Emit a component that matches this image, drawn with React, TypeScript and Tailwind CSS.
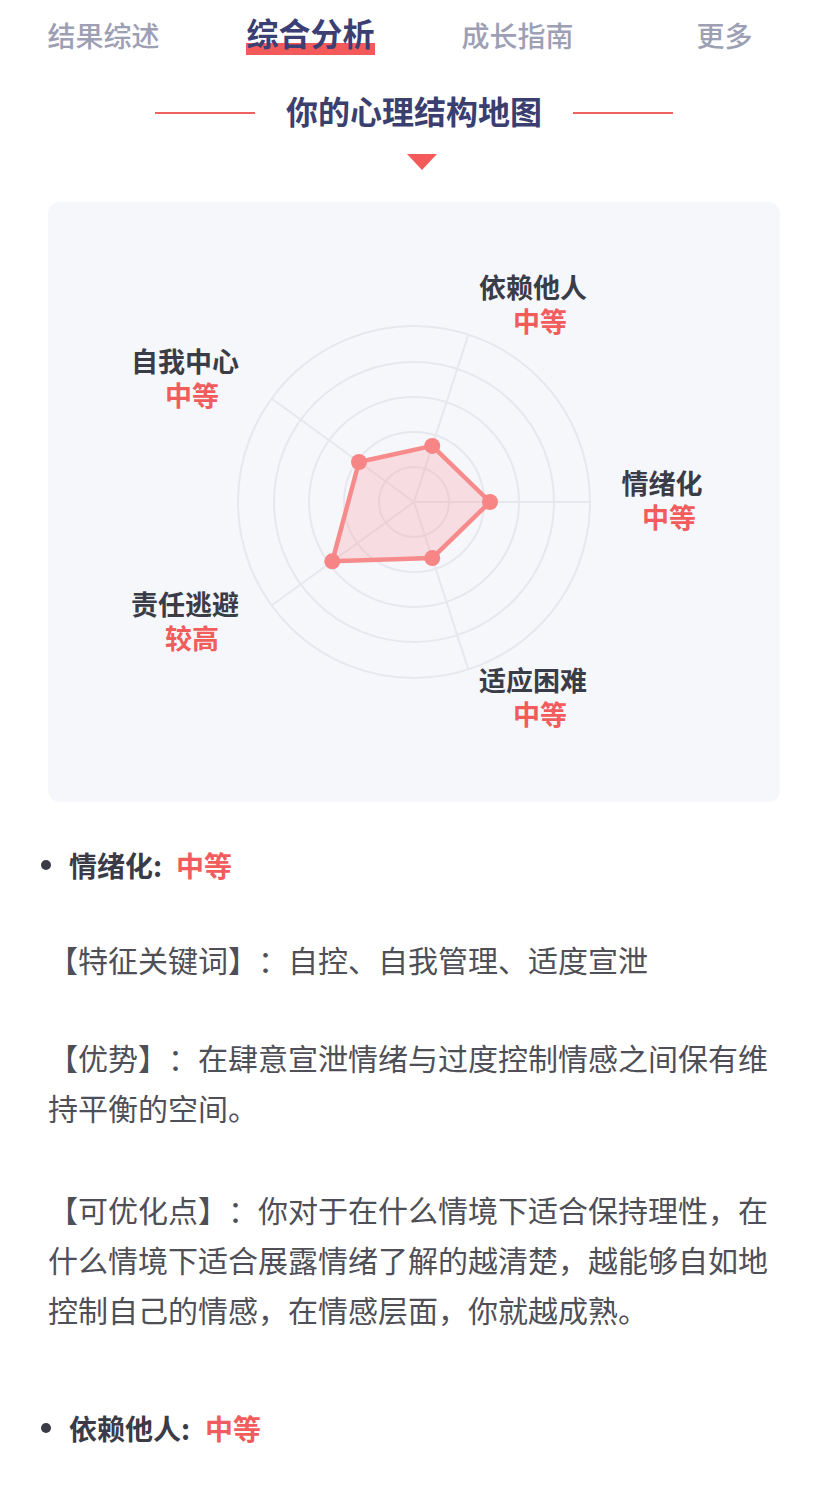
import React from "react";

const CX = 366;
const CY = 300;
const RINGS = [35, 70, 105, 140, 176];
const ANGLES = [0, -72, -144, 144, 72];
const VALUES = [76, 59, 68, 101, 59];

function pt(angle: number, r: number) {
  const a = (angle * Math.PI) / 180;
  return [CX + r * Math.cos(a), CY + r * Math.sin(a)];
}

function Radar() {
  const pts = ANGLES.map((a, i) => pt(a, VALUES[i]));
  const poly = pts.map((p) => p.join(",")).join(" ");
  return (
    <svg width="732" height="600" viewBox="0 0 732 600" className="block">
      {RINGS.map((r) => (
        <circle key={r} cx={CX} cy={CY} r={r} fill="none" stroke="#e6e8ee" strokeWidth="2" />
      ))}
      {ANGLES.map((a) => {
        const [x, y] = pt(a, 176);
        return <line key={a} x1={CX} y1={CY} x2={x} y2={y} stroke="#e6e8ee" strokeWidth="2" />;
      })}
      <polygon points={poly} fill="#fa9a9f" fillOpacity="0.28" stroke="#f78b8b" strokeWidth="4.5" strokeLinejoin="round" />
      {pts.map((p, i) => (
        <circle key={i} cx={p[0]} cy={p[1]} r="8" fill="#f78585" />
      ))}
    </svg>
  );
}

function Label({ name, value, pos }: { name: string; value: string; pos: string }) {
  return (
    <div className={`absolute flex -translate-x-1/2 flex-col items-center whitespace-nowrap text-[27px] leading-[34px] ${pos}`}>
      <span className="font-semibold text-[#3a3c48]">{name}</span>
      <span className="pl-[14px] font-semibold text-[#f25c5c]">{value}</span>
    </div>
  );
}

export default function App() {
  const font = { fontFamily: '"Noto Sans CJK SC", "Noto Sans", sans-serif' };
  return (
    <div className="min-h-[1492px] w-[828px] bg-white [text-spacing-trim:space-all]" style={font}>
      {/* Tabs */}
      <div className="grid h-[70px] grid-cols-4 items-center">
        <div className="flex justify-center">
          <span className="text-[28px] leading-[40px] font-medium text-[#9da0b4]">结果综述</span>
        </div>
        <div className="flex justify-center">
          <span className="relative -translate-y-[3px]">
            <span className="absolute left-0 right-0 top-[31px] h-[12px] bg-[#f55a5a]"></span>
            <span className="relative text-[32px] leading-[40px] font-bold text-[#3b3f73]">综合分析</span>
          </span>
        </div>
        <div className="flex justify-center">
          <span className="text-[28px] leading-[40px] font-medium text-[#9da0b4]">成长指南</span>
        </div>
        <div className="flex justify-center">
          <span className="text-[28px] leading-[40px] font-medium text-[#9da0b4]">更多</span>
        </div>
      </div>

      {/* Title */}
      <div className="mt-[20px] flex items-center justify-center gap-[31px]">
        <div className="mt-[5px] h-[2px] w-[100px] bg-[#f06262]"></div>
        <span className="text-[32px] leading-[40px] font-bold text-[#3b3f70]">你的心理结构地图</span>
        <div className="mt-[5px] h-[2px] w-[100px] bg-[#f06262]"></div>
      </div>
      <div className="mt-[24px] flex justify-center pl-[16px]">
        <div className="h-0 w-0 border-l-[15px] border-r-[15px] border-t-[16px] border-l-transparent border-r-transparent border-t-[#f55a5a]"></div>
      </div>

      {/* Chart card */}
      <div className="relative mx-[48px] mt-[32px] h-[600px] overflow-hidden rounded-[12px] bg-[#f6f7fb]">
        <Radar />
        <Label name="依赖他人" value="中等" pos="left-[485px] top-[68px]" />
        <Label name="自我中心" value="中等" pos="left-[137px] top-[142px]" />
        <Label name="情绪化" value="中等" pos="left-[614px] top-[264px]" />
        <Label name="责任逃避" value="较高" pos="left-[137px] top-[385px]" />
        <Label name="适应困难" value="中等" pos="left-[485px] top-[461px]" />
      </div>

      {/* Details */}
      <div className="px-[48px] pt-[38px]">
        <div className="flex items-center text-[28px] leading-[50px] font-bold">
          <span className="-ml-[7px] mr-[18px] h-[10px] w-[10px] rounded-full bg-[#3b3b48]"></span>
          <span className="text-[#3b3b48]">情绪化:</span>
          <span className="ml-[14px] text-[#f25c5c]">中等</span>
        </div>
        <div className="mt-[44px] text-[30px] leading-[50px] text-[#4f4f57]">
          <p>【特征关键词】：自控、自我管理、适度宣泄</p>
          <p className="mt-[48px]">【优势】：在肆意宣泄情绪与过度控制情感之间保有维持平衡的空间。</p>
          <p className="mt-[52px]">【可优化点】：你对于在什么情境下适合保持理性，在什么情境下适合展露情绪了解的越清楚，越能够自如地控制自己的情感，在情感层面，你就越成熟。</p>
        </div>
        <div className="mt-[69px] flex items-center text-[28px] leading-[50px] font-bold">
          <span className="-ml-[7px] mr-[18px] h-[10px] w-[10px] rounded-full bg-[#3b3b48]"></span>
          <span className="text-[#3b3b48]">依赖他人:</span>
          <span className="ml-[15px] text-[#f25c5c]">中等</span>
        </div>
      </div>
    </div>
  );
}
